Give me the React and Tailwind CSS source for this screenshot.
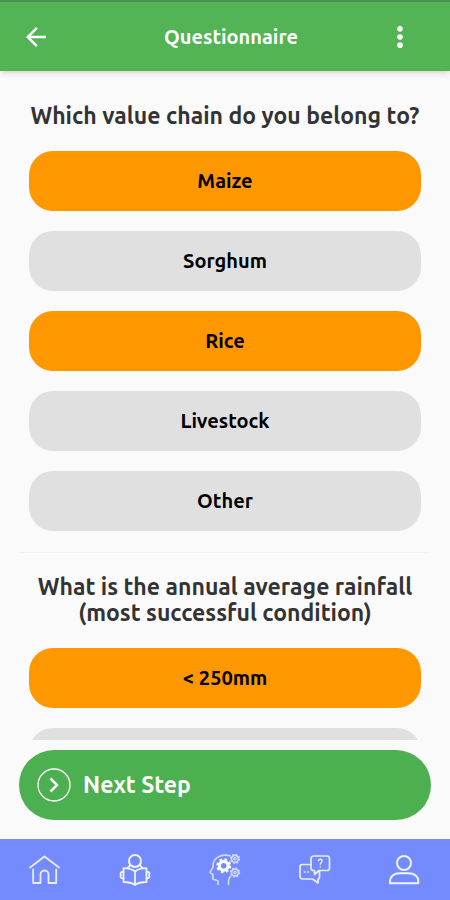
import React, { useState } from 'react';

const QUESTIONS = [
    {
        id: 'value-chain',
        title: 'Which value chain do you belong to?',
        options: [
            { id: 'maize', label: 'Maize' },
            { id: 'sorghum', label: 'Sorghum' },
            { id: 'rice', label: 'Rice' },
            { id: 'livestock', label: 'Livestock' },
            { id: 'other', label: 'Other' },
        ],
    },
    {
        id: 'rainfall',
        title: 'What is the annual average rainfall (most successful condition)',
        options: [
            { id: 'under-250', label: '< 250mm' },
            { id: 'over-250', hint: 'More rainfall ranges' },
        ],
    },
];

const NavSvg = ({ children }) => (
    <svg
        viewBox="0 0 32 32"
        className="w-8 h-8"
        fill="none"
        stroke="currentColor"
        strokeWidth="1.8"
        strokeLinecap="round"
        strokeLinejoin="round"
        aria-hidden="true"
    >
        {children}
    </svg>
);

const HomeIcon = () => (
    <NavSvg>
        <g opacity="0.85">
            <path d="M1 13.5 15.5 2.5 30 13.5" />
            <path d="M4.2 15.5V29H11.5V20.5a4 4 0 0 1 8 0V29h7.7V15.5" />
        </g>
    </NavSvg>
);

const ReaderIcon = () => (
    <NavSvg>
        <g opacity="0.9">
            <circle cx="16" cy="7" r="6" strokeWidth="2" />
            <path d="M10.5 12 8.5 14M21.5 12 23.5 14" />
            <path d="M16 17.5C13 15 9 14.2 4.5 14.2V28C9 28 13 28.8 16 31C19 28.8 23 28 27.5 28V14.2C23 14.2 19 15 16 17.5ZM16 17.5V31" />
            <path d="M4.5 18C1.5 17.5 .9 19.5 2 21C.9 22.5 1.5 24.8 4.5 24.3M27.5 18C30.5 17.5 31.1 19.5 30 21C31.1 22.5 30.5 24.8 27.5 24.3" />
        </g>
    </NavSvg>
);

const SmallGear = ({ cy }) => (
    <g opacity="0.7">
        <circle cx="26" cy={cy} r="3.4" strokeWidth="1.6" />
        <circle cx="26" cy={cy} r="4.5" strokeWidth="1.4" strokeLinecap="butt" strokeDasharray="1.8 1.734" />
        <circle cx="26" cy={cy} r="1.1" strokeWidth="1.2" />
    </g>
);

const ThinkingIcon = () => (
    <NavSvg>
        <g strokeWidth="1.6" opacity="0.7">
            <path d="M21 1.8C12 -.5 3.5 4 4 12.5C4 14.5 1.2 17 1.2 18.5C1.2 19.5 3.8 19.5 3.8 20.5V24.5C3.8 26.5 9 25.5 9 27V30.5" />
            <path d="M19.5 30.5V26.5C19.5 25 20.5 24 21.5 22.5" />
        </g>
        <circle cx="14.7" cy="11.7" r="4.4" strokeWidth="3.2" />
        <circle cx="14.7" cy="11.7" r="6.4" strokeWidth="2.2" strokeLinecap="butt" strokeDasharray="2.6 2.426" />
        <SmallGear cy={4.8} />
        <SmallGear cy={18.5} />
    </NavSvg>
);

const ChatIcon = () => (
    <NavSvg>
        <g strokeWidth="1.7" opacity="0.85">
            <path d="M14.5 2H28a2.5 2.5 0 0 1 2.5 2.5V14a2.5 2.5 0 0 1-2.5 2.500H20L15.500 20.500V16.500H14.500A2.500 2.500 0 0 1 12 14V4.500A2.500 2.500 0 0 1 14.500 2Z" />
            <path d="M12 10.500H3.500A2.500 2.500 0 0 0 1 13V22.500A2.500 2.500 0 0 0 3.500 25H13.500L19 29V25C20.500 25 20.500 24 20.500 22.500V17" />
            <path d="M5.500 18H6M9 18H9.500" />
            <path d="M19.500 6.500C20 4.500 23.200 5 23 7C22.800 8.500 21.300 8.500 21.300 10.300M21.300 12.900V13" strokeWidth="1.500" />
        </g>
    </NavSvg>
);

const ProfileIcon = () => (
    <NavSvg>
        <g strokeWidth="2" opacity="0.9">
            <circle cx="15" cy="9" r="7" />
            <path d="M1 29.200C.300 22 5.500 19.300 10.500 19.300H19.500C25 19.300 30 22 29.300 29.200Z" />
        </g>
    </NavSvg>
);

const NAV_ITEMS = [
    { label: 'Home', icon: HomeIcon },
    { label: 'Learn', icon: ReaderIcon },
    { label: 'Insights', icon: ThinkingIcon },
    { label: 'Questions', icon: ChatIcon },
    { label: 'Profile', icon: ProfileIcon },
];

const Header = () => (
    <header className="relative z-10 shrink-0 h-[71px] px-5 flex items-center justify-between bg-[#52b455] border-t-2 border-[#4c8f50] text-white shadow-md">
        <button type="button" aria-label="Back" className="w-8 h-8 flex items-center justify-center">
            <svg viewBox="0 0 24 24" className="w-[30px] h-[30px]" fill="currentColor" aria-hidden="true">
                <path d="M20 11H7.830l5.590-5.590L12 4l-8 8 8 8 1.410-1.410L7.830 13H20v-2z" />
            </svg>
        </button>
        <h1 className="flex-1 pl-10 text-center text-[20px] font-bold">Questionnaire</h1>
        <button type="button" aria-label="More options" className="w-15 h-8 flex items-center justify-center">
            <svg viewBox="0 0 24 24" className="w-7 h-7" fill="currentColor" aria-hidden="true">
                <circle cx="12" cy="5" r="2.400" />
                <circle cx="12" cy="12" r="2.400" />
                <circle cx="12" cy="19" r="2.400" />
            </svg>
        </button>
    </header>
);

const Question = ({ question, selected, onToggle }) => (
    <section aria-labelledby={question.id} className="px-[9px]">
        <h2 id={question.id} className="mb-[22px] text-center text-[23px] leading-[26px] font-semibold text-[#333333]">
            {question.title}
        </h2>
        <div className="flex flex-col gap-5">
            {question.options.map(({ id, label, hint }) => (
                <button
                    key={id}
                    type="button"
                    aria-label={hint}
                    aria-pressed={selected.includes(id)}
                    onClick={() => onToggle(id)}
                    className={`h-15 shrink-0 rounded-3xl text-[20px] font-semibold text-black ${
                        selected.includes(id) ? 'bg-[#ff9800]' : 'bg-[#e0e0e0]'
                    }`}
                >
                    {label}
                </button>
            ))}
        </div>
    </section>
);

const App = () => {
    const [selected, setSelected] = useState(['maize', 'rice', 'under-250']);

    const toggle = (id) => {
        setSelected((prev) => (prev.includes(id) ? prev.filter((item) => item !== id) : [...prev, id]));
    };

    return (
        <div className="h-screen flex flex-col bg-[#fafafa] font-[Ubuntu,'Noto_Sans',sans-serif]">
            <Header />

            {/* Scrolling list of questions */}
            <main className="flex-1 min-h-0 overflow-y-auto [scrollbar-width:none] px-5 pt-8">
                <Question question={QUESTIONS[0]} selected={selected} onToggle={toggle} />
                <hr className="my-[21px] border-[#f3f3f3]" />
                <Question question={QUESTIONS[1]} selected={selected} onToggle={toggle} />
            </main>

            <div className="shrink-0 px-[19px] pt-[10px] pb-[19px]">
                <button
                    type="button"
                    className="w-full h-[70px] px-[18px] flex items-center gap-3 rounded-full bg-[#4caf50] text-white text-[23px] font-bold"
                >
                    <svg viewBox="0 0 34 34" className="w-[34px] h-[34px]" fill="none" stroke="currentColor" aria-hidden="true">
                        <circle cx="17" cy="17" r="16" strokeWidth="1.300" />
                        <path d="M13.500 10.500 20 17l-6.500 6.500" strokeWidth="2.500" />
                    </svg>
                    Next Step
                </button>
            </div>

            <nav className="shrink-0 h-[61px] flex bg-[#738bff] text-white">
                {NAV_ITEMS.map(({ label, icon: Icon }) => (
                    <button key={label} type="button" aria-label={label} className="flex-1 flex items-center justify-center">
                        <Icon />
                    </button>
                ))}
            </nav>
        </div>
    );
};

export default App;
